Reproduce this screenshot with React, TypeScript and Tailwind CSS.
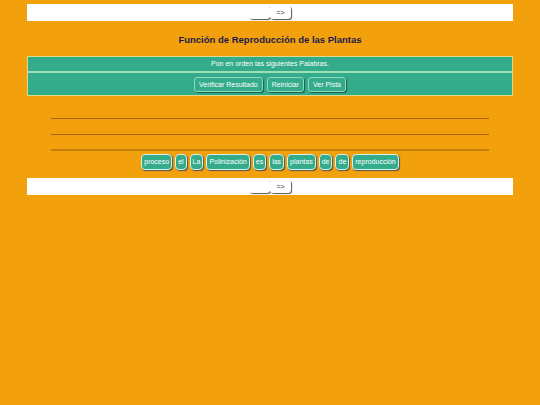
const words = ["proceso", "el", "La", "Polinización", "es", "las", "plantas", "de", "de", "reproducción"];

function NavBar() {
  return (
    <div className="mx-auto flex h-[17px] w-[90%] items-center justify-center bg-white">
      <div className="flex h-[13px] items-stretch">
        <button className="h-[13px] w-[21px] rounded-[3px] bg-white shadow-[1px_1px_1px_#555]" />
        <button className="h-[13px] w-[21px] rounded-[3px] bg-white text-[7px] leading-[13px] text-[#333] shadow-[1px_1px_1px_#555]">
          =&gt;
        </button>
      </div>
    </div>
  );
}

export default function App() {
  return (
    <div
      className="min-h-[405px] w-full bg-[#f2a00c] pt-[4px]"
      style={{ fontFamily: '"Liberation Sans", Arial, sans-serif' }}
    >
      <NavBar />

      <h1 className="mt-[12px] text-center text-[9.5px] font-bold leading-[14px] text-[#1b1b4e]">
        Función de Reproducción de las Plantas
      </h1>

      <div className="mx-auto mt-[9px] w-[90%] border border-[#d8dc8c] bg-[#34ab8b]">
        <div className="flex h-[14px] items-center justify-center pt-[1px] text-[7px] text-white">
          Pon en orden las siguientes Palabras.
        </div>
        <div className="h-[2px] bg-[#9ee0b4]" />
        <div className="flex h-[22px] items-center justify-center gap-[4px]">
          {["Verificar Resultado", "Reiniciar", "Ver Pista"].map((b) => (
            <button
              key={b}
              className="h-[15px] rounded-[3px] border border-[#8fd9c0] bg-[#34ab8b] px-[4px] text-[7px] leading-[13px] text-white shadow-[1px_1px_1px_#1d5e4d]"
            >
              {b}
            </button>
          ))}
        </div>
      </div>

      <div className="mx-auto mt-[22px] w-[81%]">
        <div className="h-[1px] bg-[#a8640a]" />
        <div className="mt-[15px] h-[1px] bg-[#a8640a]" />
        <div className="mt-[14px] h-[2px] bg-[#c47e0c]" />
      </div>

      <div className="mt-[3px] flex justify-center gap-[3px]">
        {words.map((w, i) => (
          <button
            key={i}
            className="h-[16px] rounded-[4px] border border-[#d9f2e6] bg-[#34ab8b] px-[2px] text-[7px] leading-[14px] text-white shadow-[1px_1px_1px_#555]"
          >
            {w}
          </button>
        ))}
      </div>

      <div className="mt-[8px]">
        <NavBar />
      </div>
    </div>
  );
}
